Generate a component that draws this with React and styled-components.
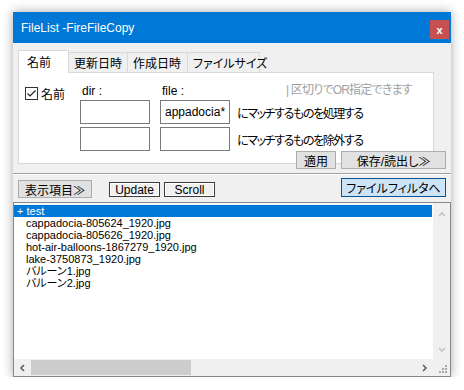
import styled, { createGlobalStyle } from "styled-components"

const Global = createGlobalStyle`
  body {
    margin: 0;
    background: #fff;
    font-family: "Liberation Sans", "Noto Sans CJK JP", sans-serif;
    font-feature-settings: "palt";
    color: #000;
  }
`;

const Window = styled.div`
  margin: 12px 0 0 13px;
  width: 438px;
  height: 365px;
  background: #f0f0f0;
  box-shadow: 0 0 10px rgba(0, 0, 0, 0.35);
  display: flex;
  flex-direction: column;
`;

const TitleBar = styled.div`
  height: 31px;
  flex: none;
  background: #0078d7;
  color: #fff;
  display: flex;
  align-items: center;
  padding-left: 8px;
  font-size: 12px;
`;

const Close = styled.div`
  width: 19px;
  height: 19px;
  margin: 4px 2px 0 auto;
  background: #c75050;
  color: #fff;
  font-size: 11px;
  font-weight: bold;
  display: flex;
  align-items: center;
  justify-content: center;
`;

const Body = styled.div`
  flex: 1;
  display: flex;
  flex-direction: column;
  padding: 7px 5px 0;
  min-height: 0;
`;

const TabStrip = styled.div`
  display: flex;
  align-items: flex-end;
  height: 22px;
  position: relative;
  z-index: 1;
`;

const Tab = styled.div`
  box-sizing: border-box;
  width: ${p => p.$w}px;
  height: ${p => (p.$active ? 23 : 20)}px;
  margin-bottom: ${p => (p.$active ? -1 : 0)}px;
  padding: ${p => (p.$active ? "0 0 1px 8px" : "0 0 0 5px")};
  background: ${p => (p.$active ? "#fff" : "#f0f0f0")};
  border: 1px solid #d9d9d9;
  border-bottom: none;
  font-size: 12px;
  display: flex;
  align-items: center;
  white-space: nowrap;
  & + & {
    margin-left: -1px;
  }
`;

const Panel = styled.div`
  box-sizing: border-box;
  width: 416px;
  height: 92px;
  flex: none;
  background: #fff;
  border: 1px solid #d9d9d9;
  padding: 12px 0 0 6px;
  display: grid;
  grid-template-columns: 55px 80px 77px 1fr;
  grid-template-rows: 12px 24px 24px;
  row-gap: 3px;
  font-size: 12px;
`;

const CheckLabel = styled.label`
  display: flex;
  align-items: center;
  gap: 3px;
  align-self: start;
  margin-top: 2px;
  height: 13px;
`;

const Box = styled.span`
  box-sizing: border-box;
  width: 13px;
  height: 13px;
  border: 1px solid #333;
  background: #fff;
  display: flex;
  align-items: center;
  justify-content: center;
`;

const FieldLabel = styled.div`
  padding-left: 2px;
  line-height: 12px;
`;

const Hint = styled.div`
  color: #a0a0a0;
  line-height: 12px;
  margin-left: 49px;
  margin-top: -1px;
  letter-spacing: -0.8px;
  white-space: nowrap;
`;

const Field = styled.input`
  box-sizing: border-box;
  width: 70px;
  height: 24px;
  border: 1px solid #7a7a7a;
  background: #fff;
  padding: 0 0 0 4px;
  margin: 0;
  font: 12px "Liberation Sans", "Noto Sans CJK JP", sans-serif;
  color: #000;
  outline: none;
`;

const RowText = styled.div`
  display: flex;
  align-items: center;
  letter-spacing: -1.4px;
  white-space: nowrap;
`;

const PanelActions = styled.div`
  display: flex;
  justify-content: flex-end;
  gap: 5px;
  margin-top: -13px;
  position: relative;
`;

const Btn = styled.button`
  box-sizing: border-box;
  width: ${p => p.$w}px;
  height: ${p => p.$h || 18}px;
  margin: 0;
  padding: 0;
  font: 12px "Liberation Sans", "Noto Sans CJK JP", sans-serif;
  font-feature-settings: "palt";
  color: #000;
  background: ${p => (p.$blue ? "#cce4f7" : "#e1e1e1")};
  border: 1px solid ${p => (p.$blue ? "#005499" : "#adadad")};
  display: flex;
  align-items: center;
  justify-content: center;
  white-space: nowrap;
`;

const FlatBtn = styled.button`
  box-sizing: border-box;
  width: 51px;
  height: 15px;
  margin: 0 0 1px ${p => p.$ml}px;
  padding: 0;
  font: 12px "Liberation Sans", sans-serif;
  color: #000;
  background: #f0f0f0;
  border: 1px solid #3c3c3c;
  box-shadow: inset 0 0 0 1px #fff;
  display: flex;
  align-items: center;
  justify-content: center;
`;

const Separator = styled.div`
  margin: 4px -5px 0;
  border-top: 1px solid #a0a0a0;
  border-bottom: 1px solid #fff;
`;

const Toolbar = styled.div`
  display: flex;
  align-items: flex-end;
  height: 20px;
  margin-top: 3px;
`;

const List = styled.div`
  flex: 1;
  min-height: 0;
  margin: 4px -5px 0;
  border: 1px solid #828790;
  background: #fff;
  display: grid;
  grid-template-columns: 1fr 17px;
  grid-template-rows: 1fr 17px;
`;

const Items = styled.div`
  padding-top: 2px;
  overflow: hidden;
  font-size: 11px;
`;

const Item = styled.div`
  height: 12px;
  line-height: 12px;
  padding-left: ${p => (p.$sel ? 3 : 12)}px;
  margin-right: 1px;
  background: ${p => (p.$sel ? "#0078d7" : "transparent")};
  color: ${p => (p.$sel ? "#fff" : "#000")};
  white-space: nowrap;
`;

const VBar = styled.div`
  background: #f0f0f0;
  display: flex;
  flex-direction: column;
  justify-content: space-between;
  align-items: center;
  padding: 8px 0 5px;
`;

const HBar = styled.div`
  background: #f0f0f0;
  display: flex;
  align-items: center;
`;

const Arrow = styled.div`
  width: 17px;
  height: 17px;
  flex: none;
  display: flex;
  align-items: center;
  justify-content: center;
`;

const Thumb = styled.div`
  width: 160px;
  height: 15px;
  background: #cdcdcd;
`;

const Grip = styled.div`
  background: #f0f0f0;
  display: flex;
  align-items: flex-end;
  justify-content: flex-end;
`;

const Chevron = ({ dir, color }) => {
  const d = {
    up: "M1 5 L4 2 L7 5",
    down: "M1 2 L4 5 L7 2",
    left: "M5 1 L2 4 L5 7",
    right: "M2 1 L5 4 L2 7",
  }[dir];
  return (
    <svg width="8" height="8" viewBox="0 0 8 8">
      <path d={d} fill="none" stroke={color} strokeWidth="1.6" />
    </svg>
  );
};

const files = [
  "cappadocia-805624_1920.jpg",
  "cappadocia-805626_1920.jpg",
  "hot-air-balloons-1867279_1920.jpg",
  "lake-3750873_1920.jpg",
  "バルーン1.jpg",
  "バルーン2.jpg",
];

export default function App() {
  return (
    <>
      <Global />
      <Window>
        <TitleBar>
          FileList -FireFileCopy
          <Close>x</Close>
        </TitleBar>
        <Body>
          <TabStrip>
            <Tab $active $w={51}>名前</Tab>
            <Tab $w={60}>更新日時</Tab>
            <Tab $w={61}>作成日時</Tab>
            <Tab $w={73}>ファイルサイズ</Tab>
          </TabStrip>
          <Panel>
            <CheckLabel>
              <Box>
                <svg width="11" height="11" viewBox="0 0 11 11">
                  <path d="M1.5 5.5 L4 8 L9.5 2.5" fill="none" stroke="#222" strokeWidth="1.2" />
                </svg>
              </Box>
              名前
            </CheckLabel>
            <FieldLabel>dir :</FieldLabel>
            <FieldLabel>file :</FieldLabel>
            <Hint>| 区切りでOR指定できます</Hint>
            <div />
            <Field defaultValue="" />
            <Field defaultValue="appadocia*" />
            <RowText>にマッチするものを処理する</RowText>
            <div />
            <Field defaultValue="" />
            <Field defaultValue="" />
            <RowText>にマッチするものを除外する</RowText>
          </Panel>
          <PanelActions>
            <Btn $w={40}>適用</Btn>
            <Btn $w={105}>保存/読出し≫</Btn>
          </PanelActions>
          <Separator />
          <Toolbar>
            <Btn $w={74}>表示項目≫</Btn>
            <FlatBtn $ml={17}>Update</FlatBtn>
            <FlatBtn $ml={4}>Scroll</FlatBtn>
            <Btn $blue $w={105} $h={19} style={{ marginLeft: "auto", alignSelf: "flex-start" }}>
              ファイルフィルタへ
            </Btn>
          </Toolbar>
          <List>
            <Items>
              <Item $sel>+ test</Item>
              {files.map(f => (
                <Item key={f}>{f}</Item>
              ))}
            </Items>
            <VBar>
              <Chevron dir="up" color="#c2c2c2" />
              <Chevron dir="down" color="#c2c2c2" />
            </VBar>
            <HBar>
              <Arrow><Chevron dir="left" color="#606060" /></Arrow>
              <Thumb />
              <Arrow style={{ marginLeft: "auto" }}><Chevron dir="right" color="#606060" /></Arrow>
            </HBar>
            <Grip>
              <svg width="17" height="17" viewBox="0 0 17 17">
                <g fill="#a8a8a8">
                  <rect x="12" y="6" width="2" height="2" />
                  <rect x="9" y="9" width="2" height="2" />
                  <rect x="12" y="9" width="2" height="2" />
                  <rect x="6" y="12" width="2" height="2" />
                  <rect x="9" y="12" width="2" height="2" />
                  <rect x="12" y="12" width="2" height="2" />
                </g>
              </svg>
            </Grip>
          </List>
        </Body>
      </Window>
    </>
  );
}
